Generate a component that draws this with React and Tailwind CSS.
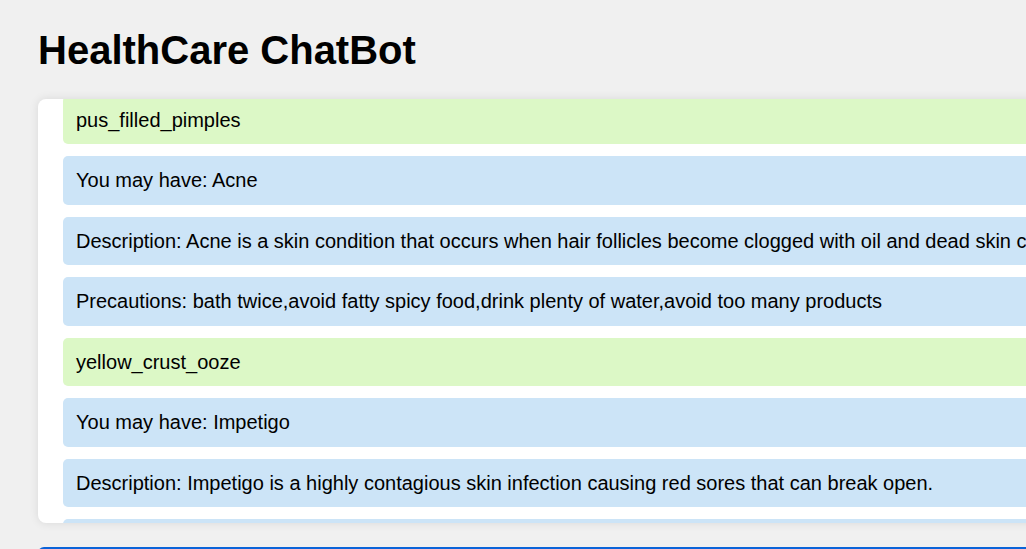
export default function App() {
  const msgs = [
    { t: "pus_filled_pimples", u: true },
    { t: "You may have: Acne" },
    { t: "Description: Acne is a skin condition that occurs when hair follicles become clogged with oil and dead skin cells." },
    { t: "Precautions: bath twice,avoid fatty spicy food,drink plenty of water,avoid too many products" },
    { t: "yellow_crust_ooze", u: true },
    { t: "You may have: Impetigo" },
    { t: "Description: Impetigo is a highly contagious skin infection causing red sores that can break open." },
    { t: "Precautions: soak affected area in warm water,use antibiotics,remove scabs with wet compressed cloth,consult doctor" },
  ];
  return (
    <div className="w-[1026px] h-[549px] overflow-hidden bg-[#f0f0f0] text-black" style={{ fontFamily: '"Liberation Sans", Arial, sans-serif' }}>
      <div className="pl-[38px] pt-[27px]">
        <h1 className="text-[40px] font-bold leading-[46px] m-0">HealthCare ChatBot</h1>
        <div className="mt-[26px] w-[1100px] h-[424px] bg-white rounded-[8px] shadow-[0_0_10px_rgba(0,0,0,0.1)] overflow-hidden pl-[25px]">
          <div className="mt-[-3.5px] flex flex-col gap-[12px]">
            {msgs.map((m, i) => (
              <div
                key={i}
                className={`${m.u ? "bg-[#dcf8c6]" : "bg-[#cce4f7]"} rounded-[5px] px-[13px] py-[12px] text-[20px] leading-[24.5px] whitespace-nowrap`}
              >
                {m.t}
              </div>
            ))}
          </div>
        </div>
        <div className="mt-[24px] w-[1100px] h-[44px] rounded-[6px] border-2 border-[#0b63d8] bg-white"></div>
      </div>
    </div>
  );
}
